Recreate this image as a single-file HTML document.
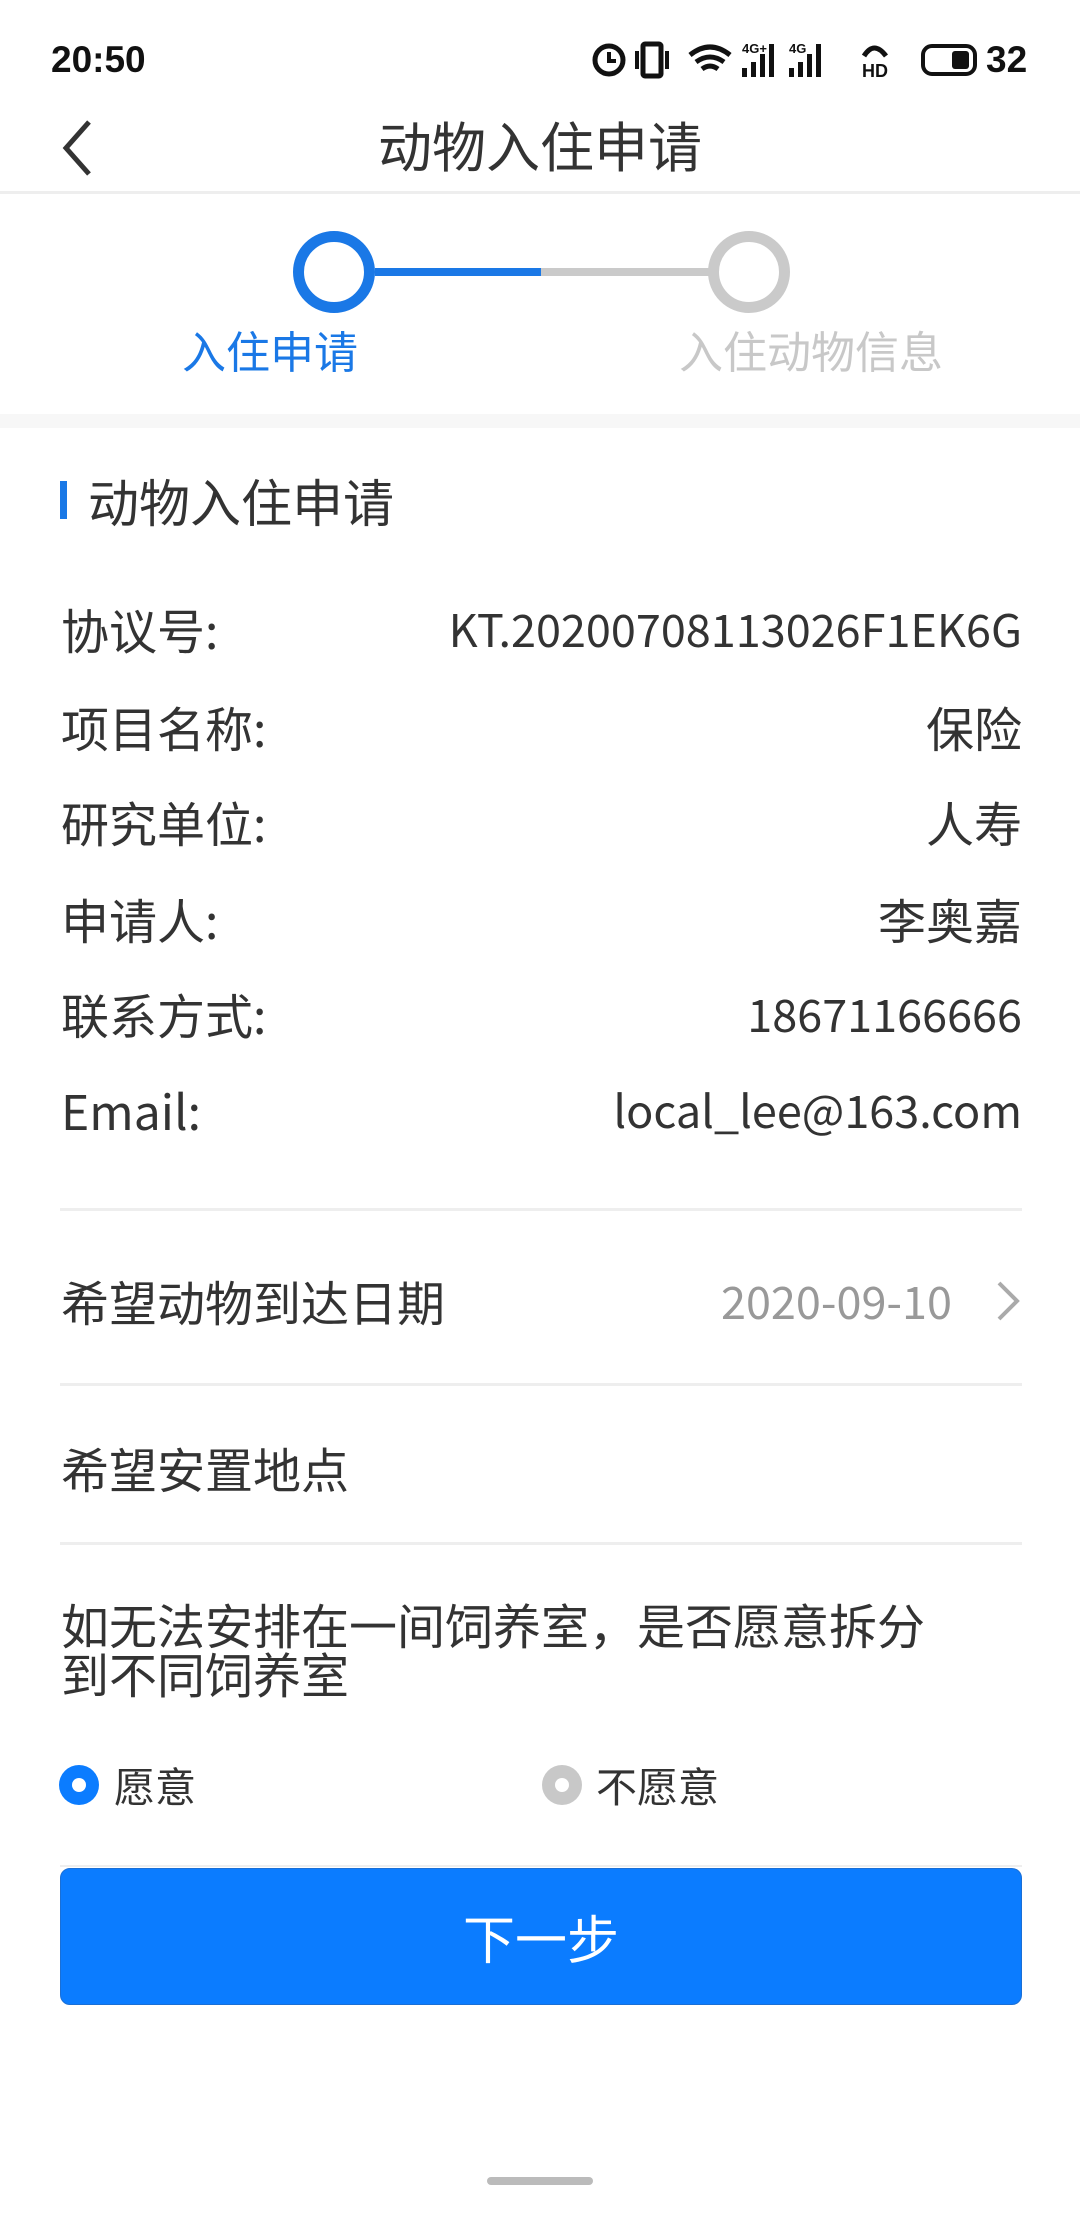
<!DOCTYPE html>
<html><head><meta charset="utf-8">
<style>
*{margin:0;padding:0;box-sizing:border-box}
html,body{width:1080px;height:2232px;background:#fff;overflow:hidden}
body{position:relative;font-family:"Noto Sans CJK SC","Liberation Sans",sans-serif;color:#333}
.a{position:absolute;white-space:nowrap}
.cj{font-family:"Noto Sans CJK SC",sans-serif}
.hr{position:absolute;left:60px;width:962px;height:3px;background:#eeeeee}
.lbl{left:61px;font-size:48px;line-height:60px}
.val{right:58px;font-size:45px;line-height:60px;text-align:right}
</style></head><body>
<!-- status bar -->
<div class="a" style="left:51px;top:36px;font-family:'Liberation Sans',sans-serif;font-size:37px;font-weight:bold;color:#111;line-height:48px">20:50</div>
<svg class="a" style="left:590px;top:38px" width="400" height="44" viewBox="0 0 400 44">
 <circle cx="19" cy="22" r="14" fill="none" stroke="#111" stroke-width="5"/>
 <path d="M19 14v9h7" stroke="#111" stroke-width="4" fill="none"/>
 <rect x="53" y="6" width="18" height="32" rx="2" fill="none" stroke="#111" stroke-width="5"/>
 <rect x="45" y="13" width="4" height="18" fill="#111"/><rect x="75" y="13" width="4" height="18" fill="#111"/>
 <path d="M100 17q20-16 40 0M106 24q14-10 28 0M112 31q8-6 16 0" stroke="#111" stroke-width="5" fill="none"/>
 <text x="152" y="15" font-size="13" font-weight="bold" fill="#111" font-family="Liberation Sans">4G+</text>
 <rect x="152" y="30" width="5" height="9" fill="#111"/><rect x="161" y="24" width="5" height="15" fill="#111"/><rect x="170" y="16" width="5" height="23" fill="#111"/><rect x="179" y="6" width="5" height="33" fill="#111"/>
 <text x="199" y="15" font-size="13" font-weight="bold" fill="#111" font-family="Liberation Sans">4G</text>
 <rect x="199" y="30" width="5" height="9" fill="#111"/><rect x="208" y="24" width="5" height="15" fill="#111"/><rect x="217" y="16" width="5" height="23" fill="#111"/><rect x="226" y="6" width="5" height="33" fill="#111"/>
 <text x="272" y="39" font-size="18" font-weight="bold" fill="#111" font-family="Liberation Sans">HD</text>
 <path d="M274 18q10-16 22 0" stroke="#111" stroke-width="5" fill="none"/>
 <rect x="333" y="8" width="52" height="28" rx="9" fill="none" stroke="#111" stroke-width="4"/>
 <rect x="362" y="13" width="17" height="18" rx="3" fill="#111"/>
</svg>
<div class="a" style="left:986px;top:36px;font-family:'Liberation Sans',sans-serif;font-size:37px;font-weight:bold;color:#111;line-height:48px">32</div>

<!-- header -->
<svg class="a" style="left:58px;top:118px" width="40" height="60" viewBox="0 0 40 60"><path d="M31 4L8 30l23 26" stroke="#333" stroke-width="5" fill="none"/></svg>
<div class="a cj" style="left:0;width:1080px;text-align:center;top:111px;font-size:54px;line-height:66px;color:#333">动物入住申请</div>
<div class="a" style="left:0;top:191px;width:1080px;height:3px;background:#eeeeee"></div>

<!-- steps -->
<div class="a" style="left:375px;top:268px;width:166px;height:8px;background:#1a78e6"></div>
<div class="a" style="left:541px;top:268px;width:168px;height:8px;background:#cacaca"></div>
<div class="a" style="left:293px;top:231px;width:82px;height:82px;border:11px solid #1a78e6;border-radius:50%"></div>
<div class="a" style="left:708px;top:231px;width:82px;height:82px;border:11px solid #cacaca;border-radius:50%"></div>
<div class="a cj" style="left:182px;top:321px;font-size:44px;line-height:56px;color:#1a78e6">入住申请</div>
<div class="a cj" style="left:679px;top:321px;font-size:44px;line-height:56px;color:#c8c8c8">入住动物信息</div>
<div class="a" style="left:0;top:414px;width:1080px;height:14px;background:#f7f7f7"></div>

<!-- section -->
<div class="a" style="left:60px;top:481px;width:7px;height:38px;background:#1a78e6"></div>
<div class="a cj" style="left:88px;top:469px;font-size:51px;line-height:62px;color:#333">动物入住申请</div>

<div class="a lbl" style="top:598px">协议号:</div><div class="a val" style="top:598px">KT.20200708113026F1EK6G</div>
<div class="a lbl" style="top:696px">项目名称:</div><div class="a val" style="top:696px;font-size:48px">保险</div>
<div class="a lbl" style="top:791px">研究单位:</div><div class="a val" style="top:791px;font-size:48px">人寿</div>
<div class="a lbl" style="top:888px">申请人:</div><div class="a val" style="top:888px;font-size:48px">李奥嘉</div>
<div class="a lbl" style="top:983px">联系方式:</div><div class="a val" style="top:983px">18671166666</div>
<div class="a lbl" style="top:1079px">Email:</div><div class="a val" style="top:1079px">local_lee@163.com</div>

<div class="hr" style="top:1208px"></div>
<div class="a lbl" style="top:1270px">希望动物到达日期</div>
<div class="a" style="right:128px;top:1270px;font-size:45px;line-height:60px;color:#999">2020-09-10</div>
<svg class="a" style="left:994px;top:1280px" width="30" height="42" viewBox="0 0 30 42"><path d="M5 3l18 18L5 39" stroke="#aaa" stroke-width="4" fill="none"/></svg>
<div class="hr" style="top:1383px"></div>
<div class="a lbl" style="top:1437px">希望安置地点</div>
<div class="hr" style="top:1542px"></div>
<div class="a lbl" style="top:1599px;font-size:48px;line-height:49px">如无法安排在一间饲养室，是否愿意拆分<br>到不同饲养室</div>

<div class="a" style="left:59px;top:1765px;width:40px;height:40px;border-radius:50%;background:#0b7cff"></div>
<div class="a" style="left:72px;top:1778px;width:14px;height:14px;border-radius:50%;background:#fff"></div>
<div class="a cj" style="left:114px;top:1758px;font-size:41px;line-height:52px;color:#333">愿意</div>
<div class="a" style="left:542px;top:1765px;width:40px;height:40px;border-radius:50%;background:#c8c8c8"></div>
<div class="a" style="left:555px;top:1778px;width:14px;height:14px;border-radius:50%;background:#fff"></div>
<div class="a cj" style="left:596px;top:1758px;font-size:41px;line-height:52px;color:#333">不愿意</div>

<div class="hr" style="top:1865px;height:2px"></div>
<div class="a" style="left:60px;top:1868px;width:962px;height:137px;background:#0b7cff;border-radius:10px;border:1px solid #1a6fd6"></div>
<div class="a cj" style="left:60px;width:962px;text-align:center;top:1904px;font-size:52px;line-height:66px;color:#fff">下一步</div>

<div class="a" style="left:487px;top:2177px;width:106px;height:8px;border-radius:4px;background:#bbbbbb"></div>
</body></html>
